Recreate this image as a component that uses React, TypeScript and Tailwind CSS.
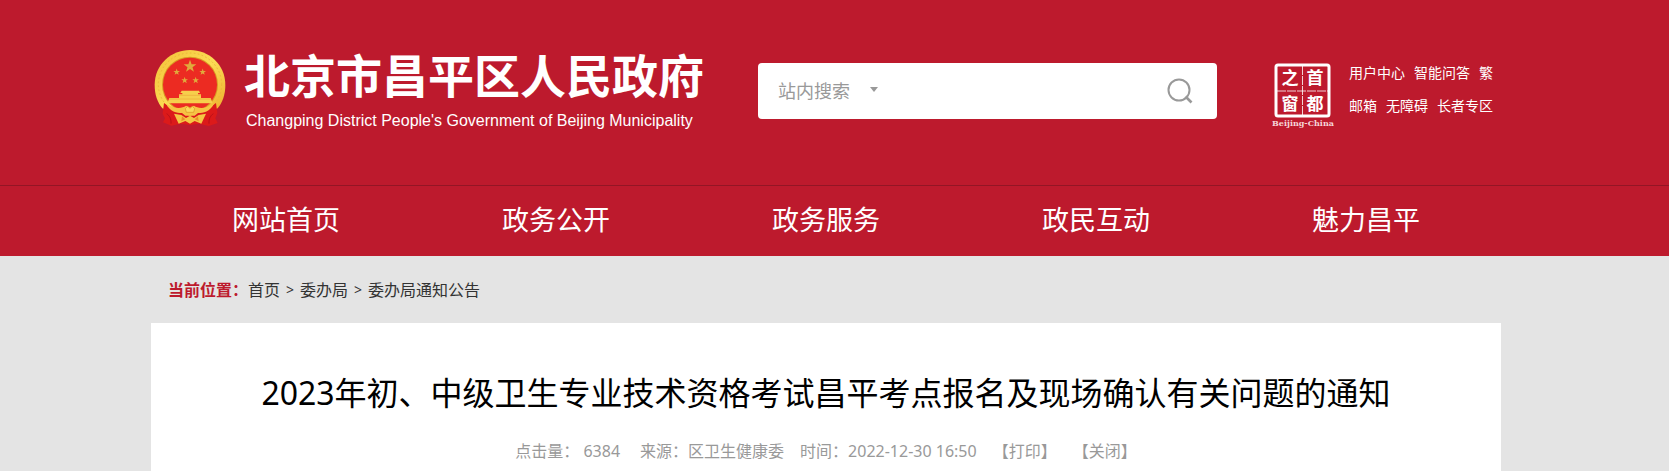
interface LinkItem {
  label: string
  href: string
}

const navItems: LinkItem[] = [
  { label: "网站首页", href: "#home" },
  { label: "政务公开", href: "#open" },
  { label: "政务服务", href: "#service" },
  { label: "政民互动", href: "#interact" },
  { label: "魅力昌平", href: "#charm" },
]

const toolLinks: LinkItem[][] = [
  [
    { label: "用户中心", href: "#user" },
    { label: "智能问答", href: "#qa" },
    { label: "繁", href: "#traditional" },
  ],
  [
    { label: "邮箱", href: "#mail" },
    { label: "无障碍", href: "#accessible" },
    { label: "长者专区", href: "#elder" },
  ],
]

const crumbs: LinkItem[] = [
  { label: "首页", href: "#home" },
  { label: "委办局", href: "#bureau" },
  { label: "委办局通知公告", href: "#notice" },
]

const star = "M0,-10 L2.4,-3.2 L9.5,-3.1 L3.8,1.2 L5.9,8.1 L0,4 L-5.9,8.1 L-3.8,1.2 L-9.5,-3.1 L-2.4,-3.2 Z"

const Emblem = () => (
  <svg viewBox="12 12 216 234" className="h-[78px] w-[72px] shrink-0" aria-hidden="true">
    <defs>
      <linearGradient id="gold" x1="0" y1="0" x2="1" y2="1">
        <stop offset="0" stopColor="#f3c038" />
        <stop offset="0.5" stopColor="#fbdc55" />
        <stop offset="1" stopColor="#eda828" />
      </linearGradient>
    </defs>
    {/* wheat ring */}
    <path d="M120 15 C176 15 226 58 226 120 C226 148 218 172 203 190 L120 222 L37 190 C22 172 14 148 14 120 C14 58 64 15 120 15 Z" fill="url(#gold)" />
    <ellipse cx="120" cy="118" rx="95" ry="94" fill="none" stroke="#eeb53a" strokeWidth="3" strokeDasharray="5 7" />
    {/* ribbon */}
    <path d="M42 174 L64 190 L84 198 L120 212 L156 198 L176 190 L198 174 L202 204 L196 220 L203 234 L176 243 L148 236 L120 240 L92 236 L64 242 L39 232 L45 220 L38 206 Z" fill="#dc1a1a" />
    <circle cx="120" cy="119" r="84" fill="#d99a24" />
    <circle cx="120" cy="119" r="81" fill="#ec2b22" />
    {/* stars */}
    <g fill="#e0aa3c">
      <path d={star} transform="translate(120 64) scale(2)" />
      <path d={star} transform="translate(80 81) scale(1.05)" />
      <path d={star} transform="translate(158 81) scale(1.05)" />
      <path d={star} transform="translate(104 106) scale(1.05)" />
      <path d={star} transform="translate(137 106) scale(1.05)" />
    </g>
    {/* gate */}
    <path d="M95 137 H147 L150 144 H144 V148 H153 V159 H182 L188 175 H52 L58 159 H87 V148 H97 V144 H91 Z" fill="#f6cf4c" />
    <path d="M88 151 H152 M58 162 H182" stroke="#eda93a" strokeWidth="2" />
    {/* gear and knot */}
    <path d="M48 176 C78 194 96 190 108 182 L120 188 L132 182 C144 190 162 194 192 176 C180 200 160 204 144 204 L134 212 H106 L96 204 C80 204 60 200 48 176 Z" fill="#f6c344" />
    <path d="M106 191 L113 184 L120 190 L127 184 L134 191 L131 202 H109 Z" fill="#fad85a" stroke="#dc8f25" strokeWidth="2" />
    <path d="M72 206 L94 210 L108 219 L120 212 L132 219 L146 210 L168 206 L154 236 L134 228 L120 236 L106 228 L86 236 Z" fill="#f5c644" />
    <path d="M96 214 L106 223 L94 229 Z M144 214 L134 223 L146 229 Z" fill="#e98f2b" />
    <path d="M50 206 C58 212 64 220 63 236 M190 206 C182 212 176 220 177 236" stroke="#b81018" strokeWidth="3" fill="none" />
  </svg>
)

const CapitalSeal = () => (
  <svg viewBox="0 0 62 66" className="h-[66px] w-[62px] shrink-0" aria-label="首都之窗">
    <rect x="4" y="2" width="53" height="51" rx="2" fill="none" stroke="#fff" strokeWidth="3" />
    <path d="M30.5 3 V52 M5 28 H56" stroke="#fff" strokeOpacity="0.8" strokeWidth="1" strokeDasharray="9 1" />
    <g className="font-['Noto_Sans_CJK_SC',sans-serif] text-[17px] font-bold" fill="#fff" textAnchor="middle">
      <text x="18" y="21">之</text>
      <text x="43" y="21">首</text>
      <text x="18" y="47">窗</text>
      <text x="43" y="47">都</text>
    </g>
    <text x="31" y="63" textAnchor="middle" fill="#f6d5d8" className="font-['DejaVu_Serif',serif] text-[8px] font-bold">
      Beijing-China
    </text>
  </svg>
)

const SearchBox = () => (
  <form className="flex h-14 w-[459px] items-center rounded bg-white pl-5 pr-4" onSubmit={(e) => e.preventDefault()}>
    <div className="relative">
      <select aria-label="搜索范围" className="w-[104px] appearance-none bg-transparent text-lg leading-7 text-[#999] outline-none">
        <option>站内搜索</option>
      </select>
      <span className="pointer-events-none absolute right-1 top-2.5 border-x-4 border-t-[5px] border-x-transparent border-t-[#999]" />
    </div>
    <input type="text" aria-label="关键词" className="min-w-0 flex-1 text-lg text-[#666] outline-none" />
    <button type="submit" aria-label="搜索" className="p-2">
      <svg viewBox="0 0 26 26" className="h-[26px] w-[26px]" fill="none" stroke="#999" strokeWidth="2">
        <circle cx="12" cy="12" r="10.5" />
        <path d="M18.5 18.5 L24.5 24.5" strokeWidth="2.6" />
      </svg>
    </button>
  </form>
)

const Header = () => (
  <header className="bg-[#bd1a2d] pr-[17px] text-white">
    <div className="mx-auto flex h-[185px] max-w-[1350px] items-start justify-between pl-[3px] pr-2">
      <a href="#home" className="flex items-start pt-[49px]">
        <Emblem />
        <span className="ml-[18px] block whitespace-nowrap">
          <span className="block text-[46px] font-bold leading-[52px]">北京市昌平区人民政府</span>
          <span className="mt-2 block pl-0.5 font-['Liberation_Sans',Arial,sans-serif] text-base leading-6">
            Changping District People's Government of Beijing Municipality
          </span>
        </span>
      </a>
      <div className="flex items-start gap-[55px] pt-[63px]">
        <SearchBox />
        <div className="flex gap-[15px]">
          <CapitalSeal />
          <div className="text-sm">
            {toolLinks.map((row, i) => (
              <div key={i} className="mb-[14px] flex justify-between gap-[9px] leading-[19px]">
                {row.map((item) => (
                  <a key={item.label} href={item.href}>{item.label}</a>
                ))}
              </div>
            ))}
          </div>
        </div>
      </div>
    </div>
  </header>
)

const NavBar = () => (
  <nav className="border-t border-[#931525] bg-[#bd1a2d] pb-0.5 pr-[17px] text-white">
    <ul className="mx-auto grid max-w-[1350px] grid-cols-5">
      {navItems.map((item) => (
        <li key={item.label}>
          <a href={item.href} className="block h-[68px] text-center text-[27px] leading-[68px]">{item.label}</a>
        </li>
      ))}
    </ul>
  </nav>
)

const Breadcrumb = () => (
  <div className="flex h-[67px] items-center pl-[17px] text-[#333]">
    <span className="font-bold text-[#bd1a2d]">当前位置：</span>
    {crumbs.map((item, i) => (
      <span key={item.label} className="flex items-center">
        {i > 0 && <span className="px-1.5 text-sm">&gt;</span>}
        <a href={item.href}>{item.label}</a>
      </span>
    ))}
  </div>
)

export default function App() {
  return (
    <div className="min-h-screen bg-[#e4e4e4] font-['Noto_Sans','Noto_Sans_CJK_SC',sans-serif]" lang="zh-CN">
      <Header />
      <NavBar />
      <main className="pr-[17px]">
        <div className="mx-auto max-w-[1350px]">
          <Breadcrumb />
          <article className="bg-white pb-2 pt-[46px] text-center">
            <h1 className="text-[32px] leading-[48px] text-black">
              2023年初、中级卫生专业技术资格考试昌平考点报名及现场确认有关问题的通知
            </h1>
            <div className="mt-[22px] flex justify-center leading-6 text-[#999]">
              <span className="mr-5">点击量： 6384</span>
              <span className="mr-4">来源：区卫生健康委</span>
              <span className="mr-4">时间：2022-12-30 16:50</span>
              <button type="button" className="mr-4">【打印】</button>
              <button type="button">【关闭】</button>
            </div>
          </article>
        </div>
      </main>
    </div>
  )
}
